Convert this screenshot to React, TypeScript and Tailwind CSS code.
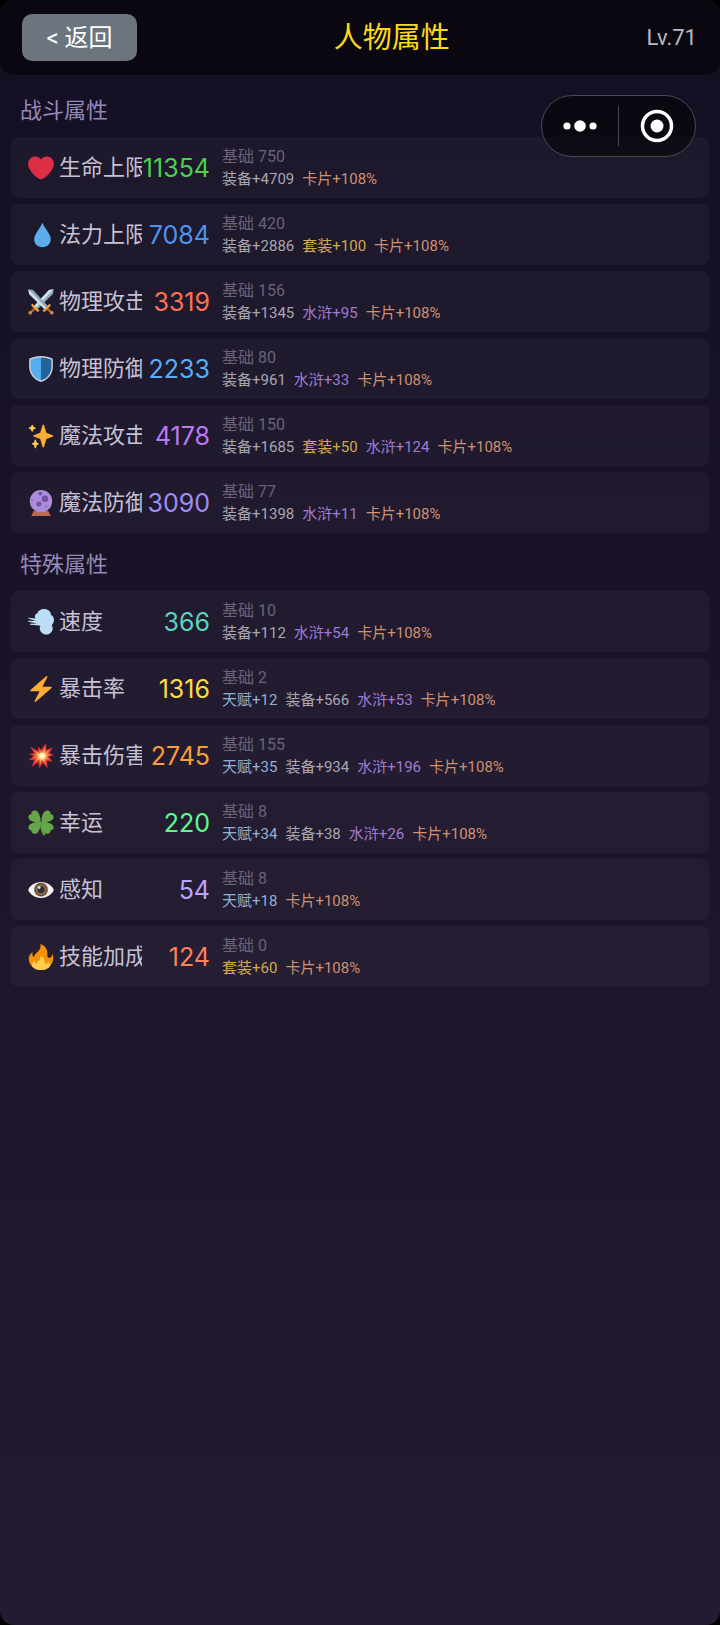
import React from 'react';

type Source = 'talent' | 'gear' | 'set' | 'outlaw' | 'card';

interface Bonus {
  source: Source;
  amount: string;
}

interface Stat {
  icon: React.ReactNode;
  name: string;
  value: number;
  valueColor: string;
  base: number;
  bonuses: Bonus[];
}

const SOURCES: Record<Source, { label: string; color: string }> = {
  talent: { label: '天赋', color: 'text-[#8fb2d6]' },
  gear: { label: '装备', color: 'text-[#a9a6b0]' },
  set: { label: '套装', color: 'text-[#d3a94f]' },
  outlaw: { label: '水浒', color: 'text-[#a07bd3]' },
  card: { label: '卡片', color: 'text-[#cf9170]' },
};

const ICONS = {
  heart: (
    <path
      fill="#DD2E44"
      d="M35.885 11.833c0-5.45-4.418-9.868-9.867-9.868-3.308 0-6.227 1.633-8.018 4.129-1.791-2.496-4.71-4.129-8.017-4.129-5.45 0-9.868 4.417-9.868 9.868 0 .772.098 1.52.266 2.241C1.751 22.587 11.216 31.568 18 34.034c6.783-2.466 16.249-11.447 17.617-19.959.17-.721.268-1.469.268-2.242z"
    />
  ),
  droplet: (
    <path fill="#5DADEC" d="M20 1c-1 3-4.500 8-8 13.500C10 17.800 8.500 20.500 8.500 24 8.500 30.500 13.500 35 20 35s11.500-4.500 11.500-11c0-3.500-1.500-6.200-3.500-9.500C24.500 9 21 4 20 1z" />
  ),
  swords: (
    <>
      <path fill="#8FA9B8" d="M35.500.5l-1 6.500L13 28l-4.500-4.500L29 1.500z" />
      <path fill="#D3E2EA" d="M35.500.5L11 25.800l-2.500-2.300L29 1.500z" />
      <path fill="#8FA9B8" d="M.5.500l1 6.500L23 28l4.500-4.500L7 1.500z" />
      <path fill="#D3E2EA" d="M.5.500l1 6.500L23 28l2-2z" />
      <path fill="#A9603A" d="M8.500 25.500l2.500 2.500-6 5.500-2.500-2.500zM27.500 25.500L25 28l6 5.500 2.500-2.500z" />
      <path fill="#F2A23C" d="M6.500 20.500c-2 .5-2.500 2-1.500 3.200l7.500 7.500c1.500 1 3 0 3.200-1.700l-3-2.500-3.700-3.500zM29.500 20.500c2 .5 2.500 2 1.500 3.200l-7.500 7.500c-1.500 1-3 0-3.200-1.700l3-2.500 3.700-3.500z" />
      <circle cx="3" cy="33" r="2.500" fill="#D48B4A" />
      <circle cx="33" cy="33" r="2.500" fill="#D48B4A" />
    </>
  ),
  shield: (
    <>
      <path fill="#CCD6DD" d="M34 3.500C29 1.500 24 0 18 0S7 1.500 2 3.500c0 0-.5 5-.5 10C1.500 25 8 33 18 36c10-3 16.500-11 16.500-22.500 0-5-.5-10-.5-10z" />
      <path fill="#55ACEE" d="M18 2C12.500 2 8.500 3.200 4 5c-.3 3-.5 5.500-.5 8.500C3.500 24 9 31 18 34z" />
      <path fill="#269" d="M18 2c5.500 0 9.500 1.200 14 3 .3 3 .5 5.500.5 8.500C32.500 24 27 31 18 34z" />
    </>
  ),
  sparkles: (
    <>
      <path
        fill="#FFAC33"
        d="M34.347 16.893l-8.899-3.294-3.323-10.891c-.128-.42-.517-.708-.956-.708-.439 0-.828.288-.956.708l-3.322 10.891-8.9 3.294c-.393.146-.653.519-.653.938 0 .418.26.793.653.938l8.895 3.293 3.324 11.223c.126.424.516.715.959.715.442 0 .833-.291.959-.716l3.324-11.223 8.896-3.293c.391-.144.652-.518.652-.937 0-.418-.261-.792-.653-.938z"
      />
      <path
        fill="#FFCC4D"
        d="M14.347 27.894l-2.314-.856-.9-3.3c-.118-.436-.513-.738-.964-.738-.451 0-.846.302-.965.737l-.9 3.3-2.313.856c-.393.146-.653.52-.653.938 0 .418.26.793.653.938l2.301.853.907 3.622c.112.444.511.756.97.756.459 0 .858-.312.97-.757l.907-3.622 2.301-.853c.393-.144.653-.519.653-.937 0-.418-.26-.793-.653-.937zM10.009 6.231l-2.364-.875-.876-2.365c-.145-.393-.519-.653-.938-.653-.418 0-.792.26-.938.653l-.875 2.365-2.365.875c-.393.146-.653.52-.653.938 0 .418.26.793.653.938l2.365.875.875 2.365c.146.393.52.653.938.653.418 0 .792-.26.938-.653l.875-2.365 2.365-.875c.393-.146.653-.52.653-.938 0-.418-.26-.792-.653-.938z"
      />
    </>
  ),
  crystal: (
    <>
      <path fill="#BF6952" d="M8 29h20l3 5.500c.5.800 0 1.500-1 1.500H6c-1 0-1.500-.7-1-1.500z" />
      <circle cx="18" cy="15.500" r="15.500" fill="#AA8DD8" />
      <circle cx="17" cy="5" r="2.500" fill="#7450A8" />
      <circle cx="23.500" cy="12" r="4.500" fill="#7450A8" />
      <circle cx="15" cy="19.500" r="3.500" fill="#7450A8" />
      <circle cx="6" cy="14" r="1.500" fill="#9266CC" />
      <circle cx="25" cy="23" r="1.500" fill="#9266CC" />
    </>
  ),
  dash: (
    <path
      fill="#BBDDF5"
      d="M36 15c0-3.200-1.700-5.600-4-6.700C31.700 3.700 28 0 22 0c-4.500 0-8 2.500-9 6-2.200.8-3.500 2.500-3.500 4.500 0 1 .3 1.900.9 2.700L1 12c-.8 0-.8 1 0 1.300l9.500 3.200-9.700-.2c-1 0-1 1.300 0 1.500l11.700 2.200-9.500.4c-.9.100-.9 1.200 0 1.400l12 1.200c.8.300 1.500.5 2.300.6-.8 1.200-1.200 2.400-1 3.800.5 4.500 4.200 8 9 8 4.500 0 8-3 8.800-7 .4-2-.1-4-1.200-5.700C34 21 36 18.500 36 15z"
    />
  ),
  bolt: (
    <path
      fill="#FFAC33"
      d="M32.938 15.651C32.792 15.26 32.418 15 32 15H19.925L26.89 1.458c.219-.426.106-.947-.271-1.243C26.437.071 26.218 0 26 0c-.233 0-.466.082-.653.243L18 6.588 3.347 19.243c-.316.273-.43.714-.284 1.105S3.582 21 4 21h12.075L9.11 34.542c-.219.426-.106.947.271 1.243.182.144.401.215.619.215.233 0 .466-.082.653-.243L18 29.412l14.653-12.655c.317-.273.43-.714.285-1.106z"
    />
  ),
  burst: (
    <>
      <path fill="#D8313A" d="M3 5l10.500 6L14 5l4 4.500L25 0l.5 9.500L34 6l-4 8 5.500 2.500L29 19l5 7-7.500-1L27 35l-6.500-7.500L16 35l-2-8-9 6 3.500-9-7.500-.5 6.500-5L1 15l7.500-.5z" />
      <path fill="#F4703A" d="M7.500 8.500l7.500 4.500 1-4 3 2.500L24 4.500l.3 7 6-2.500-3 5.500 4.700 2-5.500 2.500 3.500 4.500-5.500-.8.500 8-5-6-3 5-2-6-6 4 2-6.500-5.500 0 5-3.700L6 15.500l5-1z" />
      <path fill="#FFC95A" d="M11.500 12l5 3 1.500-2.500 2 1 3-4v5l4-1.500-2 3.500 3 1.500-3.700 1.500 1.700 3-3.500-.5v4l-3-3-2 2.500-1.500-3.500-3.500 2 1.500-4-3-.5 3-2-2.500-2 2.500-.5z" />
      <circle cx="19.500" cy="17.500" r="3.800" fill="#FFF6DC" />
    </>
  ),
  clover: (
    <>
      <path fill="none" stroke="#5C9E45" strokeWidth="3.500" strokeLinecap="round" d="M18 18c.3 6 1.500 11 4 15.500" />
      <path
        fill="#65A64A"
        d="M17.500 16.500C11 18 1 15.500.5 10c-.2-2.500 1.500-4 4-4C4.300 3 6.500.5 9.500.8 14.500 1 17.500 9 17.500 16.500zM18.500 16.500C18.500 9 21.500 1 26.500.8 29.500.5 31.700 3 31.500 6c2.500 0 4.200 1.500 4 4-.5 5.500-10.500 8-17 6.500zM18.500 17.500c6.500-1.500 16.500 1 17 6.500.2 2.500-1.500 4-4 4 .2 3-2 5.200-5 5-5-.2-8-8-8-15.500zM17.500 17.500c0 7.500-3 15.300-8 15.500-3 .2-5.200-2-5-5-2.500 0-4.200-1.500-4-4 .5-5.500 10.500-8 17-6.500z"
      />
    </>
  ),
  eye: (
    <>
      <path fill="#F5F3F2" d="M18 7C9 7 3 12.500.8 16.500c-.6 1-.6 2 0 3C3 23.500 9 29 18 29s15-5.500 17.200-9.500c.6-1 .6-2 0-3C33 12.500 27 7 18 7z" />
      <circle cx="18" cy="17.500" r="9.500" fill="#6B4A35" />
      <circle cx="18" cy="17.500" r="7.500" fill="#8D6A4B" />
      <circle cx="18" cy="17.500" r="4.800" fill="#292F33" />
      <circle cx="15.500" cy="14.500" r="2" fill="#D9DEE2" />
    </>
  ),
  fire: (
    <>
      <path
        fill="#F4900C"
        d="M35 19c0-2.100-.4-4.100-1.100-6-.5 4.500-2.600 6.500-4.900 6-3.500-.8-1.500-4.500-2.200-8C26 6 22.500 1.500 17 0c1.500 4.500-.5 8-4 11-2.500 2-4.500 5-4.500 7-2-.5-3-3-2.200-7C3 13.500 1 17.500 1 20c0 9 7.600 16 17 16s17-7.500 17-17z"
      />
      <path
        fill="#FFCC4D"
        d="M28.400 24c-.1 3-2.800 4-4.400 2.500-2-2-.5-4.500-2.500-7-1.300-1.700-3-2.500-4.500-2.500 1 3-.5 5-3 7-1.500 1.200-2 2.500-2 3.500-2 0-2.800-2-2.500-4.500C7 24.500 5.500 26.500 5.500 29c0 4 5.500 7 12.500 7s12.500-3 12.500-7c0-2-.8-4-2.100-5z"
      />
    </>
  ),
};

const CARD: Bonus = { source: 'card', amount: '+108%' };

const COMBAT: Stat[] = [
  { icon: ICONS.heart, name: '生命上限', value: 11354, valueColor: 'text-[#4cd04f]', base: 750, bonuses: [{ source: 'gear', amount: '+4709' }, CARD] },
  { icon: ICONS.droplet, name: '法力上限', value: 7084, valueColor: 'text-[#4c94f0]', base: 420, bonuses: [{ source: 'gear', amount: '+2886' }, { source: 'set', amount: '+100' }, CARD] },
  { icon: ICONS.swords, name: '物理攻击', value: 3319, valueColor: 'text-[#fb7350]', base: 156, bonuses: [{ source: 'gear', amount: '+1345' }, { source: 'outlaw', amount: '+95' }, CARD] },
  { icon: ICONS.shield, name: '物理防御', value: 2233, valueColor: 'text-[#59adf6]', base: 80, bonuses: [{ source: 'gear', amount: '+961' }, { source: 'outlaw', amount: '+33' }, CARD] },
  { icon: ICONS.sparkles, name: '魔法攻击', value: 4178, valueColor: 'text-[#bd77f3]', base: 150, bonuses: [{ source: 'gear', amount: '+1685' }, { source: 'set', amount: '+50' }, { source: 'outlaw', amount: '+124' }, CARD] },
  { icon: ICONS.crystal, name: '魔法防御', value: 3090, valueColor: 'text-[#a18bf2]', base: 77, bonuses: [{ source: 'gear', amount: '+1398' }, { source: 'outlaw', amount: '+11' }, CARD] },
];

const SPECIAL: Stat[] = [
  { icon: ICONS.dash, name: '速度', value: 366, valueColor: 'text-[#5bd3bf]', base: 10, bonuses: [{ source: 'gear', amount: '+112' }, { source: 'outlaw', amount: '+54' }, CARD] },
  { icon: ICONS.bolt, name: '暴击率', value: 1316, valueColor: 'text-[#fcdc44]', base: 2, bonuses: [{ source: 'talent', amount: '+12' }, { source: 'gear', amount: '+566' }, { source: 'outlaw', amount: '+53' }, CARD] },
  { icon: ICONS.burst, name: '暴击伤害', value: 2745, valueColor: 'text-[#fa9d38]', base: 155, bonuses: [{ source: 'talent', amount: '+35' }, { source: 'gear', amount: '+934' }, { source: 'outlaw', amount: '+196' }, CARD] },
  { icon: ICONS.clover, name: '幸运', value: 220, valueColor: 'text-[#5cfa91]', base: 8, bonuses: [{ source: 'talent', amount: '+34' }, { source: 'gear', amount: '+38' }, { source: 'outlaw', amount: '+26' }, CARD] },
  { icon: ICONS.eye, name: '感知', value: 54, valueColor: 'text-[#bba5fa]', base: 8, bonuses: [{ source: 'talent', amount: '+18' }, CARD] },
  { icon: ICONS.fire, name: '技能加成', value: 124, valueColor: 'text-[#fb805c]', base: 0, bonuses: [{ source: 'set', amount: '+60' }, CARD] },
];

function StatRow({ stat }: { stat: Stat }) {
  return (
    <li className="flex h-[61px] items-center rounded-lg bg-white/[0.035] pl-[17px] pr-3">
      <svg viewBox="0 0 36 36" className="h-[26px] w-[26px] shrink-0" aria-hidden="true">
        {stat.icon}
      </svg>
      <span className="ml-[5px] w-[83px] shrink-0 overflow-hidden whitespace-nowrap text-[22px] leading-8 text-[#c6c1d4]">
        {stat.name}
      </span>
      <span
        className={`flex w-[68px] shrink-0 justify-end font-['Inter','Noto_Sans_CJK_SC',sans-serif] text-[25px] leading-8 ${stat.valueColor}`}
      >
        {stat.value}
      </span>
      <div className="ml-3 min-w-0 flex-1">
        <p className="text-base leading-[22px] text-[#696376]">基础 {stat.base}</p>
        <p className="flex gap-2 whitespace-nowrap text-[15px] leading-[22px]">
          {stat.bonuses.map((b) => (
            <span key={b.source} className={SOURCES[b.source].color}>
              {SOURCES[b.source].label}
              {b.amount}
            </span>
          ))}
        </p>
      </div>
    </li>
  );
}

function StatSection({ title, stats }: { title: string; stats: Stat[] }) {
  return (
    <section>
      <h2 className="mb-[10px] pl-[9px] text-[22px] leading-8 text-[#9689b8]">{title}</h2>
      <ul className="flex flex-col gap-[6px]">
        {stats.map((s) => (
          <StatRow key={s.name} stat={s} />
        ))}
      </ul>
    </section>
  );
}

function Capsule() {
  return (
    <div className="absolute right-6 top-[95px] flex h-[62px] w-[155px] items-center rounded-full border border-[#4b4852] bg-black/50">
      <button type="button" aria-label="更多" className="flex h-full flex-1 items-center justify-center">
        <svg viewBox="0 0 34 12" className="h-3 w-[34px]" fill="#fff">
          <circle cx="4" cy="6" r="3.600" />
          <circle cx="17" cy="6" r="5.800" />
          <circle cx="30" cy="6" r="3.600" />
        </svg>
      </button>
      <span className="h-10 w-px bg-[#4b4852]" />
      <button type="button" aria-label="关闭" className="flex h-full flex-1 items-center justify-center">
        <svg viewBox="0 0 34 34" className="h-[34px] w-[34px]">
          <circle cx="17" cy="17" r="14.500" fill="none" stroke="#fff" strokeWidth="3.500" />
          <circle cx="17" cy="17" r="6.500" fill="#fff" />
        </svg>
      </button>
    </div>
  );
}

export default function App() {
  return (
    <div className="min-h-screen bg-black font-['Roboto','Noto_Sans_CJK_SC',sans-serif]">
      <div className="relative min-h-screen overflow-hidden rounded-[14px] bg-linear-to-b from-[#140f22] to-[#241a31]">
        <header className="flex h-[75px] items-center justify-between rounded-b-[14px] bg-black/50 pl-[22px] pr-[23px]">
          <button
            type="button"
            className="h-[47px] w-[115px] rounded-[10px] bg-[#6c757d] text-2xl text-white"
          >
            &lt; 返回
          </button>
          <h1 className="text-[29px] leading-10 text-[#fcd91c]">人物属性</h1>
          <span className="text-[22px] text-[#bbb8c2]">Lv.71</span>
        </header>
        <main className="flex flex-col gap-4 px-[11px] pb-6 pt-5">
          <StatSection title="战斗属性" stats={COMBAT} />
          <StatSection title="特殊属性" stats={SPECIAL} />
        </main>
        <Capsule />
      </div>
    </div>
  );
}
